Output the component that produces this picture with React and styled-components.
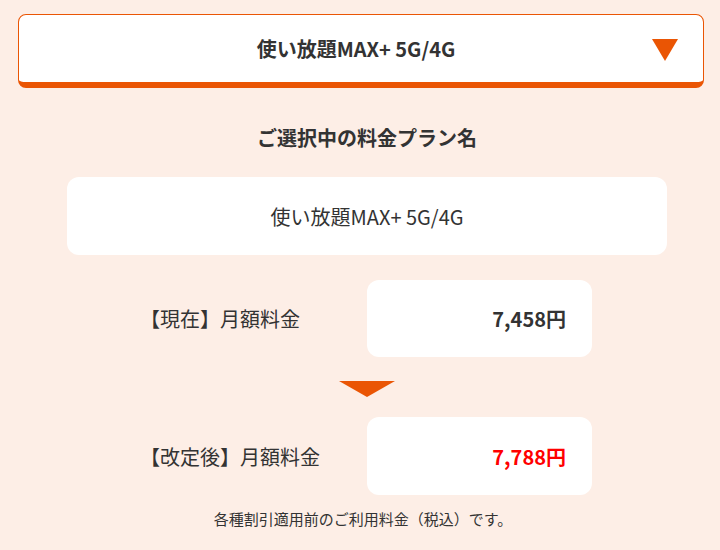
import React from 'react';
import styled, { createGlobalStyle } from 'styled-components';

const GlobalStyle = createGlobalStyle`
  body {
    margin: 0;
    background: #fdeee6;
    font-family: "Noto Sans CJK JP", "Noto Sans", sans-serif;
    color: #333;
  }
`;

const ORANGE = '#ea5504';

const Page = styled.div`
  padding: 14px 16px 0 18px;
`;

const Select = styled.div`
  position: relative;
  box-sizing: border-box;
  height: 74px;
  padding-right: 10px;
  background: #fff;
  border: 1px solid ${ORANGE};
  border-bottom-width: 6px;
  border-radius: 8px;
  display: flex;
  align-items: center;
  justify-content: center;
  font-size: 20px;
  font-weight: 700;
`;

const SelectArrow = styled.span`
  position: absolute;
  right: 25px;
  top: 24px;
  width: 0;
  height: 0;
  border-left: 13px solid transparent;
  border-right: 13px solid transparent;
  border-top: 22px solid ${ORANGE};
`;

const Content = styled.div`
  width: 600px;
  margin-left: 49px;
`;

const Heading = styled.h2`
  margin: 35px 0 0;
  text-align: center;
  font-size: 20px;
  line-height: 30px;
  font-weight: 700;
`;

const PlanBox = styled.div`
  margin-top: 24px;
  height: 78px;
  background: #fff;
  border-radius: 12px;
  display: flex;
  align-items: center;
  justify-content: center;
  font-size: 20px;
`;

const Row = styled.div`
  margin-top: ${(p) => p.$gap}px;
  display: grid;
  grid-template-columns: 300px 225px;
  align-items: center;
`;

const Label = styled.div`
  padding-left: 73px;
  font-size: 20px;
`;

const Value = styled.div`
  height: ${(p) => p.$h}px;
  background: #fff;
  border-radius: 12px;
  display: flex;
  align-items: center;
  justify-content: flex-end;
  padding-right: 26px;
  font-size: 20px;
  font-weight: 700;
  color: ${(p) => (p.$red ? '#ff0000' : '#333')};
`;

const DownArrow = styled.div`
  margin: 24px auto 0;
  width: 0;
  height: 0;
  border-left: 28px solid transparent;
  border-right: 28px solid transparent;
  border-top: 16px solid ${ORANGE};
`;

const Note = styled.p`
  margin: 14px 0 0;
  text-align: center;
  font-size: 15px;
  line-height: 20px;
  padding-left: 4px;
`;

export default function App() {
  return (
    <>
      <GlobalStyle />
      <Page>
        <Select>
          使い放題MAX+ 5G/4G
          <SelectArrow />
        </Select>
        <Content>
          <Heading>ご選択中の料金プラン名</Heading>
          <PlanBox>使い放題MAX+ 5G/4G</PlanBox>
          <Row $gap={25}>
            <Label>【現在】月額料金</Label>
            <Value $h={77}>7,458円</Value>
          </Row>
          <DownArrow />
          <Row $gap={20}>
            <Label>【改定後】月額料金</Label>
            <Value $h={78} $red>7,788円</Value>
          </Row>
        </Content>
        <Note>各種割引適用前のご利用料金（税込）です。</Note>
      </Page>
    </>
  );
}
